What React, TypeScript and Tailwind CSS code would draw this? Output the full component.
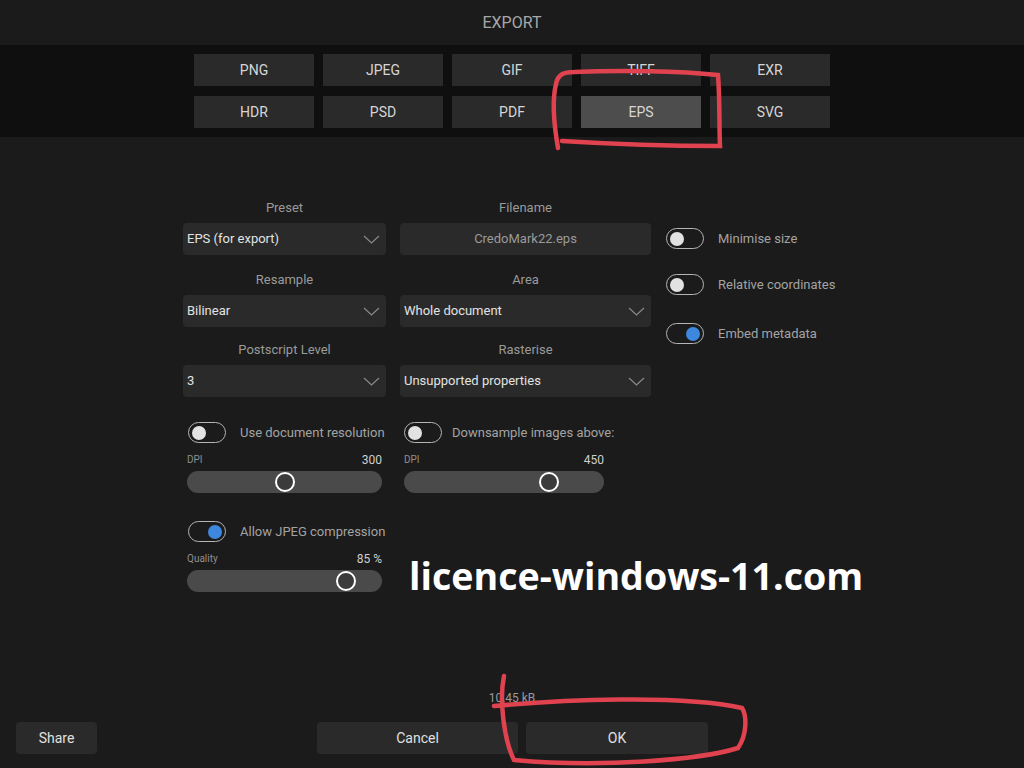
import React from 'react';

const formats = ['PNG', 'JPEG', 'GIF', 'TIFF', 'EXR', 'HDR', 'PSD', 'PDF', 'EPS', 'SVG'];

function Chevron() {
  return (
    <svg width="17" height="9" viewBox="0 0 17 9" fill="none">
      <polyline points="1,1 8.5,8 16,1" stroke="#8a8a8a" strokeWidth="1.2" />
    </svg>
  );
}

function Dropdown({ value }: { value: string }) {
  return (
    <div className="h-[32px] bg-[#2a2a2a] rounded-sm flex items-center justify-between pl-[4px] pr-[6px] text-[13px] text-[#e2e2e2]">
      <span>{value}</span>
      <Chevron />
    </div>
  );
}

function Toggle({ on = false }: { on?: boolean }) {
  return (
    <div className="w-[38px] h-[21px] rounded-full border border-[#b5b5b5] flex items-center px-[3px] shrink-0">
      {on ? (
        <div className="ml-auto w-[14px] h-[14px] rounded-full bg-[#3d88de]" />
      ) : (
        <div className="w-[14px] h-[14px] rounded-full bg-[#e2e2e2]" />
      )}
    </div>
  );
}

function Slider({ label, value, pct, width }: { label: string; value: string; pct: number; width: string }) {
  return (
    <div className={width}>
      <div className="flex items-end justify-between h-[14px] leading-[14px]">
        <span className="text-[10px] text-[#8f8f8f]">{label}</span>
        <span className="text-[12px] text-[#cfcfcf]">{value}</span>
      </div>
      <div className="relative mt-[4px] h-[22px] rounded-full bg-[#4a4a4a]">
        <div
          className="absolute top-[1px] w-[20px] h-[20px] -ml-[10px] rounded-full border-2 border-white bg-[#3b3b3b]"
          style={{ left: `${pct}%` }}
        />
      </div>
    </div>
  );
}

export default function App() {
  return (
    <div className="relative w-[1024px] h-[768px] bg-[#1b1b1b] flex flex-col overflow-hidden" style={{ fontFamily: 'Roboto, "Liberation Sans", sans-serif' }}>
      {/* 헤더 */}
      <div className="h-[45px] flex items-center justify-center text-[16px] text-[#a8a8a8]">EXPORT</div>

      {/* 포맷 선택 */}
      <div className="h-[92px] bg-[#0f0f0f] pt-[9px]">
        <div className="grid grid-cols-5 gap-x-[9px] gap-y-[10px] w-[636px] mx-auto">
          {formats.map((f) => (
            <div
              key={f}
              className={`h-[32px] flex items-center justify-center text-[14px] text-[#d6d6d6] ${f === 'EPS' ? 'bg-[#4d4d4d]' : 'bg-[#2a2a2a]'}`}
            >
              {f}
            </div>
          ))}
        </div>
      </div>

      {/* 설정 */}
      <div className="ml-[183px] mt-[63px]">
        <div className="flex">
          <div className="grid grid-cols-[203px_251px] gap-x-[14px]">
            <div className="text-center text-[13px] leading-[16px] text-[#9a9a9a]">Preset</div>
            <div className="text-center text-[13px] leading-[16px] text-[#9a9a9a]">Filename</div>
            <div className="mt-[7px]"><Dropdown value="EPS (for export)" /></div>
            <div className="mt-[7px] h-[32px] bg-[#2a2a2a] rounded-sm flex items-center justify-center text-[13px] text-[#9a9a9a]">CredoMark22.eps</div>

            <div className="mt-[17px] text-center text-[13px] leading-[16px] text-[#9a9a9a]">Resample</div>
            <div className="mt-[17px] text-center text-[13px] leading-[16px] text-[#9a9a9a]">Area</div>
            <div className="mt-[7px]"><Dropdown value="Bilinear" /></div>
            <div className="mt-[7px]"><Dropdown value="Whole document" /></div>

            <div className="mt-[15px] text-center text-[13px] leading-[16px] text-[#9a9a9a]">Postscript Level</div>
            <div className="mt-[15px] text-center text-[13px] leading-[16px] text-[#9a9a9a]">Rasterise</div>
            <div className="mt-[7px]"><Dropdown value="3" /></div>
            <div className="mt-[7px]"><Dropdown value="Unsupported properties" /></div>
          </div>

          <div className="ml-[15px] mt-[28px] flex flex-col text-[13px] text-[#a3a3a3]">
            <div className="flex items-center gap-[14px] h-[21px]"><Toggle /><span>Minimise size</span></div>
            <div className="flex items-center gap-[14px] h-[21px] mt-[25px]"><Toggle /><span>Relative coordinates</span></div>
            <div className="flex items-center gap-[14px] h-[21px] mt-[28px]"><Toggle on /><span>Embed metadata</span></div>
          </div>
        </div>

        <div className="pl-[4px] mt-[25px] text-[13px] text-[#a3a3a3]">
          <div className="flex gap-[22px]">
            <div className="w-[195px]">
              <div className="flex items-center gap-[14px] h-[21px] pl-[1px]"><Toggle /><span className="whitespace-nowrap">Use document resolution</span></div>
              <div className="mt-[10px]"><Slider label="DPI" value="300" pct={50.3} width="w-[195px]" /></div>
            </div>
            <div className="w-[200px]">
              <div className="flex items-center gap-[10px] h-[21px]"><Toggle /><span className="whitespace-nowrap">Downsample images above:</span></div>
              <div className="mt-[10px]"><Slider label="DPI" value="450" pct={72.5} width="w-[200px]" /></div>
            </div>
          </div>

          <div className="mt-[28px] w-[195px]">
            <div className="flex items-center gap-[14px] h-[21px] pl-[1px]"><Toggle on /><span className="whitespace-nowrap">Allow JPEG compression</span></div>
            <div className="mt-[10px]"><Slider label="Quality" value="85 %" pct={81.5} width="w-[195px]" /></div>
          </div>
        </div>
      </div>

      {/* 워터마크 */}
      <div
        className="absolute left-[409px] top-[551px] text-[37.6px] leading-[50px] font-bold text-white"
        style={{ fontFamily: '"Open Sans", sans-serif' }}
      >
        licence-windows-11.com
      </div>

      {/* 하단 */}
      <div className="mt-auto pb-[14px]">
        <div className="text-center text-[12px] leading-[16px] text-[#9a9a9a]">10.45 kB</div>
        <div className="mt-[16px] flex items-center px-[16px]">
          <div className="w-[81px] h-[32px] bg-[#2a2a2a] rounded-sm flex items-center justify-center text-[14px] text-[#e0e0e0]">Share</div>
          <div className="ml-[220px] flex gap-[8px]">
            <div className="w-[201px] h-[32px] bg-[#2a2a2a] rounded-sm flex items-center justify-center text-[14px] text-[#e0e0e0]">Cancel</div>
            <div className="w-[182px] h-[32px] bg-[#2a2a2a] rounded-sm flex items-center justify-center text-[14px] text-[#e0e0e0]">OK</div>
          </div>
        </div>
      </div>

      {/* 빨간 표시 */}
      <svg className="absolute inset-0 pointer-events-none" width="1024" height="768" viewBox="0 0 1024 768" fill="none">
        <path
          d="M558 148 C554 125 552 100 556 84 C558 74 564 72 574 72 C620 70 680 71 718 75 C720 100 719 125 720 146 C680 146 610 144 562 141"
          stroke="#e0434f"
          strokeWidth="4.5"
          strokeLinecap="round"
        />
        <path
          d="M504 676 C499 700 504 740 514 760 C600 768 700 760 738 748 C747 735 747 716 742 708 C680 694 560 700 494 706"
          stroke="#e0434f"
          strokeWidth="4.5"
          strokeLinecap="round"
        />
      </svg>
    </div>
  );
}
